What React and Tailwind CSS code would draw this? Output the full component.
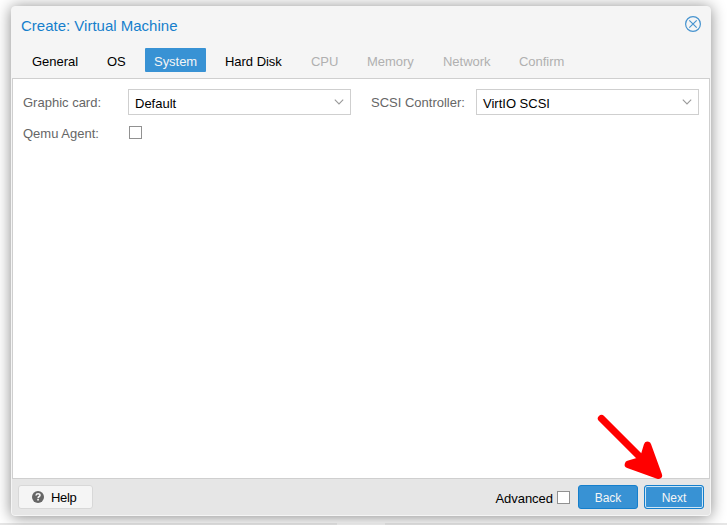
import React from 'react';

const tabs = [
  { label: 'General', cls: 'w-[65px] text-black' },
  { label: 'OS', cls: 'w-[37px] text-black' },
  { label: 'System', cls: 'w-[61px] bg-[#3892d4] text-[#f5f5f5]' },
  { label: 'Hard Disk', cls: 'w-[76px] text-black' },
  { label: 'CPU', cls: 'w-[46px] text-[#b0b0b0]' },
  { label: 'Memory', cls: 'w-[66px] text-[#b0b0b0]' },
  { label: 'Network', cls: 'w-[66px] text-[#b0b0b0]' },
  { label: 'Confirm', cls: 'w-[64px] text-[#b0b0b0]' },
];

function CloseIcon() {
  return (
    <svg width="16" height="16" viewBox="0 0 16 16" fill="none" stroke="#4693cf">
      <circle cx="8" cy="8" r="7.4" strokeWidth="1.2" />
      <path d="M4.3 4.3 11.7 11.7M11.7 4.3 4.3 11.7" strokeWidth="1.15" />
    </svg>
  );
}

function Select({ value }) {
  return (
    <div className="flex h-[26px] w-[223px] items-center justify-between border border-[#cfcfcf] bg-white pr-[6px] pl-[6px]">
      <span className="pt-[2px] text-black">{value}</span>
      <svg width="10" height="6" viewBox="0 0 10 6" fill="none" stroke="#9a9a9a" className="mb-px">
        <path d="M.8.7 5 4.9 9.2.7" strokeWidth="1.1" />
      </svg>
    </div>
  );
}

function Checkbox() {
  return <span className="block size-[13px] border border-[#919191] bg-white" />;
}

export default function App() {
  return (
    <div className="relative h-[525px] w-[727px] overflow-hidden bg-white pt-[6px] pl-[11px] font-['Liberation_Sans',Arial,sans-serif] text-[13px] leading-[17px]">
      <div className="absolute bottom-0 left-0 h-[2px] w-full bg-[#e6e6e6]">
        <div className="ml-[337px] h-full w-[48px] bg-[#f5f5f5]" />
      </div>

      <div className="relative flex h-[510px] w-[700px] flex-col rounded-[4px] border border-[#f5f5f5] bg-[#f5f5f5] shadow-[0_1px_15px_#888]">
        <header className="flex h-[35px] items-start justify-between pt-[9px] pr-[9px] pl-[9px]">
          <h1 className="pt-[1px] text-[15px] leading-[18px] text-[#157fcc]">Create: Virtual Machine</h1>
          <CloseIcon />
        </header>
        <nav className="flex h-[36px] gap-[10px] pt-[6px] pl-[11px]">
          {tabs.map((t) => (
            <div key={t.label} className={`h-[24px] shrink-0 rounded-[1px] pl-[9px] leading-[27px] tracking-[-0.03px] whitespace-nowrap ${t.cls}`}>
              {t.label}
            </div>
          ))}
        </nav>
        <main className="h-[401px] border border-[#cfcfcf] bg-white px-[10px] pt-[10px] text-[#666]">
          <div className="flex items-center">
            <span className="w-[105px]">Graphic card:</span>
            <Select value="Default" />
            <span className="ml-[20px] w-[105px]">SCSI Controller:</span>
            <Select value="VirtIO SCSI" />
          </div>
          <div className="flex h-[35px] items-center">
            <span className="w-[106px] pt-[1px]">Qemu Agent:</span>
            <Checkbox />
          </div>
        </main>
        <footer className="flex flex-1 items-center rounded-b-[3px] bg-[#e6e6e6] pr-[6px] pl-[6px] text-black">
          <button className="flex h-[24px] w-[75px] items-center rounded-[3px] border border-[#d8d8d8] bg-[#f5f5f5] pl-[13px]">
            <svg width="12" height="12" viewBox="0 0 12 12" fill="none">
              <circle cx="6" cy="6" r="6" fill="#666" />
              <path d="M4 4.5C4.2 3.1 5 2.7 6 2.7c1.2 0 2 .6 2 1.6C8 5.6 6.1 5.4 6.1 7.2" stroke="#f5f5f5" strokeWidth="1.6" />
              <path d="M5.2 8h1.7v1.6H5.2z" fill="#f5f5f5" />
            </svg>
            <span className="ml-[7px] tracking-[-0.3px]">Help</span>
          </button>
          <span className="mr-[4px] ml-auto pt-[2px] tracking-[-0.03px]">Advanced</span>
          <Checkbox />
          <button className="ml-[8px] h-[24px] w-[60px] rounded-[3px] border border-[#157fcc] bg-[#3892d4] pt-px text-[12px] leading-[22px] text-[#f5f5f5]">
            Back
          </button>
          <button className="ml-[6px] h-[24px] w-[60px] rounded-[3px] border border-[#157fcc] bg-[#3892d4] pt-px text-[12px] leading-[22px] text-[#f5f5f5] shadow-[inset_0_0_0_1px_#cde5f5]">
            Next
          </button>
        </footer>
      </div>

      <svg className="absolute top-[410px] left-[592px]" width="76" height="74" viewBox="592 410 76 74">
        <path d="M601.5 418.5 642 459" stroke="#f00" strokeWidth="7.3" strokeLinecap="round" />
        <path d="M647.5 445.5 658.3 475.3 628.5 464.5 638.5 461.5 644.5 455.5z" fill="#f00" stroke="#f00" strokeWidth="7.6" strokeLinejoin="round" />
      </svg>
    </div>
  );
}
